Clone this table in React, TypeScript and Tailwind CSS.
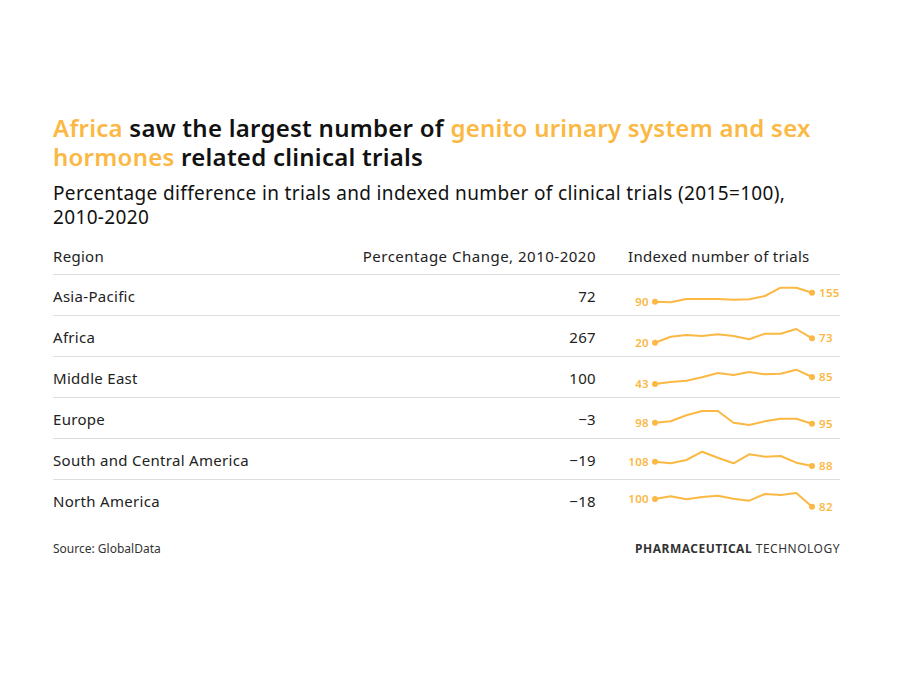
import React from "react";

const ORANGE = "#fbb843";

type Row = { region: string; pct: string; pts: number[]; first: string; last: string };

const XS = [27, 42.7, 58.4, 74.1, 89.8, 105.5, 121.2, 136.9, 152.6, 168.3, 184];

const rows: Row[] = [
  { region: "Asia-Pacific", pct: "72", first: "90", last: "155", pts: [26.7, 27.3, 24, 24, 24, 24.7, 24.3, 21, 12.7, 12.7, 17.7] },
  { region: "Africa", pct: "267", first: "20", last: "73", pts: [26.7, 20.7, 19, 20, 18.3, 20, 23.3, 17.7, 17.7, 13, 22.3] },
  { region: "Middle East", pct: "100", first: "43", last: "85", pts: [27, 25, 23.7, 20.3, 16, 18, 15, 17.3, 16.7, 12.7, 20] },
  { region: "Europe", pct: "\u22123", first: "98", last: "95", pts: [24.7, 23.3, 17.3, 13, 13, 24.7, 27, 23.3, 20.7, 20.7, 25.7] },
  { region: "South and Central America", pct: "\u221219", first: "108", last: "88", pts: [22.7, 24.3, 21, 12.7, 18.7, 24.3, 15.3, 17.7, 17, 23.7, 27] },
  { region: "North America", pct: "\u221218", first: "100", last: "82", pts: [19, 16.3, 19.3, 17, 15.7, 18.7, 20.7, 14, 15, 13, 26.7] },
];

function Spark({ r }: { r: Row }) {
  const d = r.pts.map((y, i) => `${i === 0 ? "M" : "L"}${XS[i]} ${y}`).join(" ");
  const y0 = r.pts[0];
  const y1 = r.pts[r.pts.length - 1];
  return (
    <svg width="212" height="40" viewBox="0 0 212 40" className="block">
      <path d={d} fill="none" stroke={ORANGE} strokeWidth="2" strokeLinejoin="round" />
      <circle cx={XS[0]} cy={y0} r="3" fill={ORANGE} />
      <circle cx={XS[10]} cy={y1} r="3" fill={ORANGE} />
      <text x="21" y={y0 + 4} textAnchor="end" fontSize="11.5" fill={ORANGE} fontFamily="'Noto Sans', sans-serif" fontWeight="600">
        {r.first}
      </text>
      <text x="191" y={y1 + 4} textAnchor="start" fontSize="11.5" fill={ORANGE} fontFamily="'Noto Sans', sans-serif" fontWeight="600">
        {r.last}
      </text>
    </svg>
  );
}

export default function App() {
  return (
    <div className="w-[900px] h-[675px] bg-white text-[#1a1a1a]" style={{ fontFamily: "'Noto Sans', 'Open Sans', sans-serif" }}>
      <div className="ml-[53px] w-[787px] pt-[113px]">
        <h1 className="text-[24px] leading-[29px] font-semibold text-[#111] tracking-[0.25px] w-[787px]">
          <span className="text-[#fbb843]">Africa</span> saw the largest number of{" "}
          <span className="text-[#fbb843]">genito urinary system and sex</span>{" "}
          <span className="text-[#fbb843]">hormones</span> related clinical trials
        </h1>
        <p className="mt-[10px] text-[19px] leading-[24px] text-[#111] tracking-[0.35px] w-[770px]">
          Percentage difference in trials and indexed number of clinical trials (2015=100), 2010-2020
        </p>
        <div className="mt-[10px]">
          <div className="flex items-end h-[36px] pb-[9px] border-b border-[#dddddd] text-[15px] leading-[18px] text-[#222] tracking-[0.3px]">
            <div className="w-[308px]">Region</div>
            <div className="w-[235px] text-right tracking-[0.5px]">Percentage Change, 2010-2020</div>
            <div className="ml-[32px] w-[212px]">Indexed number of trials</div>
          </div>
          {rows.map((r, i) => (
            <div
              key={r.region}
              className={`flex items-center h-[41px] pt-[2px] text-[15px] text-[#222] tracking-[0.3px] ${i < rows.length - 1 ? "border-b border-[#dddddd]" : ""}`}
            >
              <div className="w-[308px]">{r.region}</div>
              <div className="w-[235px] text-right">{r.pct}</div>
              <div className="ml-[32px] w-[212px] h-[40px] self-start -mt-[2px]">
                <Spark r={r} />
              </div>
            </div>
          ))}
        </div>
        <div className="mt-[19px] flex justify-between items-center text-[12px] text-[#333]">
          <span>Source: GlobalData</span>
          <span className="tracking-[0.5px]">
            <span className="font-bold">PHARMACEUTICAL</span> TECHNOLOGY
          </span>
        </div>
      </div>
    </div>
  );
}
